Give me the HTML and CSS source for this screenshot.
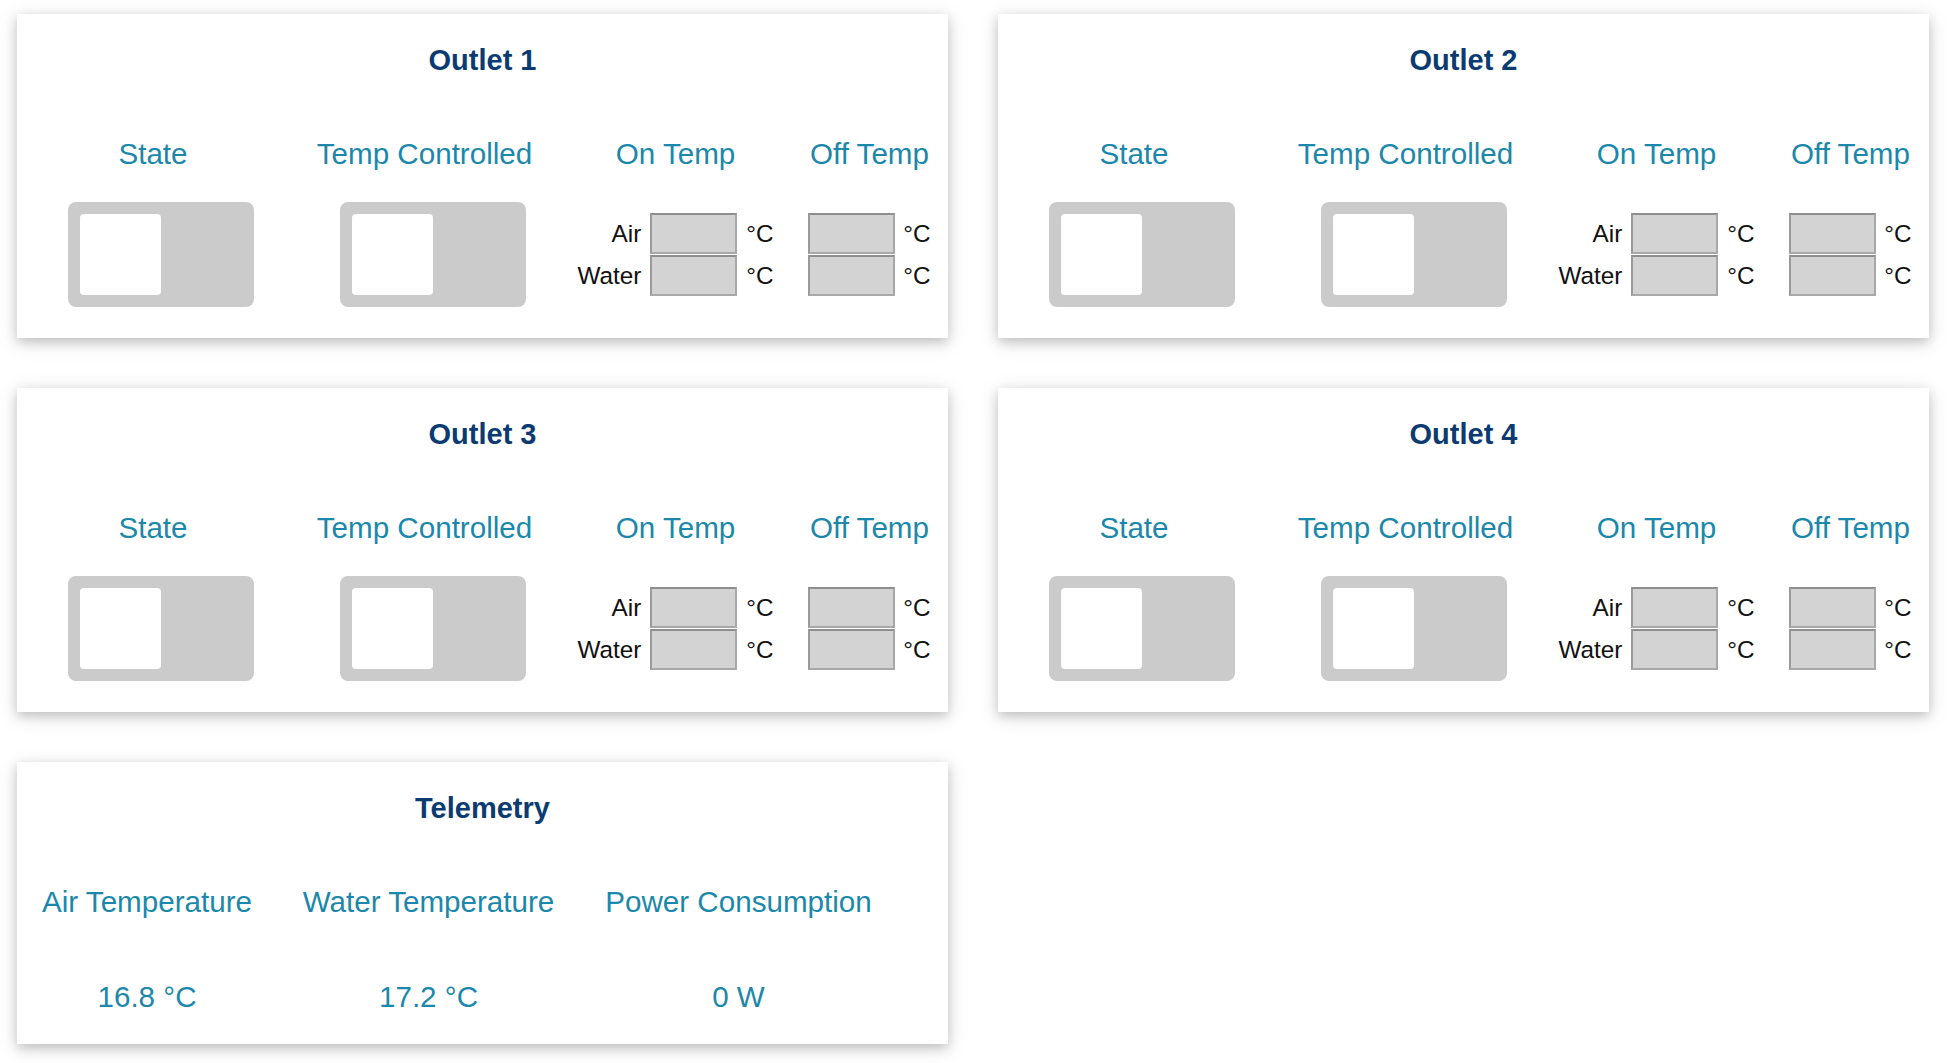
FILE: index.html
```html
<!DOCTYPE html>
<html lang="en">
<head>
<meta charset="utf-8">
<title>Outlets</title>
<link rel="stylesheet" href="styles.css">
</head>
<body>
<div class="page">
  <section class="card">
    <h2 class="card-title">Outlet 1</h2>
    <div class="outlet-grid">
      <div class="col-label">State</div>
      <div class="col-label">Temp Controlled</div>
      <div class="col-label">On Temp</div>
      <div class="col-label">Off Temp</div>
      <div class="cell"><span class="switch"><span class="knob"></span></span></div>
      <div class="cell"><span class="switch"><span class="knob"></span></span></div>
      <div class="cell">
        <div class="temps">
          <span class="t-label">Air</span><span class="t-input"></span><span class="t-unit">°C</span>
          <span class="t-label">Water</span><span class="t-input"></span><span class="t-unit">°C</span>
        </div>
      </div>
      <div class="cell">
        <div class="temps temps-off">
          <span class="t-input"></span><span class="t-unit">°C</span>
          <span class="t-input"></span><span class="t-unit">°C</span>
        </div>
      </div>
    </div>
  </section>

  <section class="card">
    <h2 class="card-title">Outlet 2</h2>
    <div class="outlet-grid">
      <div class="col-label">State</div>
      <div class="col-label">Temp Controlled</div>
      <div class="col-label">On Temp</div>
      <div class="col-label">Off Temp</div>
      <div class="cell"><span class="switch"><span class="knob"></span></span></div>
      <div class="cell"><span class="switch"><span class="knob"></span></span></div>
      <div class="cell">
        <div class="temps">
          <span class="t-label">Air</span><span class="t-input"></span><span class="t-unit">°C</span>
          <span class="t-label">Water</span><span class="t-input"></span><span class="t-unit">°C</span>
        </div>
      </div>
      <div class="cell">
        <div class="temps temps-off">
          <span class="t-input"></span><span class="t-unit">°C</span>
          <span class="t-input"></span><span class="t-unit">°C</span>
        </div>
      </div>
    </div>
  </section>

  <section class="card">
    <h2 class="card-title">Outlet 3</h2>
    <div class="outlet-grid">
      <div class="col-label">State</div>
      <div class="col-label">Temp Controlled</div>
      <div class="col-label">On Temp</div>
      <div class="col-label">Off Temp</div>
      <div class="cell"><span class="switch"><span class="knob"></span></span></div>
      <div class="cell"><span class="switch"><span class="knob"></span></span></div>
      <div class="cell">
        <div class="temps">
          <span class="t-label">Air</span><span class="t-input"></span><span class="t-unit">°C</span>
          <span class="t-label">Water</span><span class="t-input"></span><span class="t-unit">°C</span>
        </div>
      </div>
      <div class="cell">
        <div class="temps temps-off">
          <span class="t-input"></span><span class="t-unit">°C</span>
          <span class="t-input"></span><span class="t-unit">°C</span>
        </div>
      </div>
    </div>
  </section>

  <section class="card">
    <h2 class="card-title">Outlet 4</h2>
    <div class="outlet-grid">
      <div class="col-label">State</div>
      <div class="col-label">Temp Controlled</div>
      <div class="col-label">On Temp</div>
      <div class="col-label">Off Temp</div>
      <div class="cell"><span class="switch"><span class="knob"></span></span></div>
      <div class="cell"><span class="switch"><span class="knob"></span></span></div>
      <div class="cell">
        <div class="temps">
          <span class="t-label">Air</span><span class="t-input"></span><span class="t-unit">°C</span>
          <span class="t-label">Water</span><span class="t-input"></span><span class="t-unit">°C</span>
        </div>
      </div>
      <div class="cell">
        <div class="temps temps-off">
          <span class="t-input"></span><span class="t-unit">°C</span>
          <span class="t-input"></span><span class="t-unit">°C</span>
        </div>
      </div>
    </div>
  </section>

  <section class="card card-telemetry">
    <h2 class="card-title">Telemetry</h2>
    <div class="telemetry-grid">
      <div class="col-label">Air Temperature</div>
      <div class="col-label">Water Temperature</div>
      <div class="col-label">Power Consumption</div>
      <div class="value">16.8 °C</div>
      <div class="value">17.2 °C</div>
      <div class="value">0 W</div>
    </div>
  </section>
</div>
</body>
</html>
```

FILE: styles.css
```css
html, body {
  margin: 0;
  padding: 0;
  background: #ffffff;
}

body {
  font-family: "Liberation Sans", Arial, Helvetica, sans-serif;
  color: #111111;
}

.page {
  display: grid;
  grid-template-columns: 931px 931px;
  column-gap: 50px;
  row-gap: 50px;
  padding: 14px 0 19px 17px;
  align-items: start;
}

.card {
  background: #ffffff;
  box-shadow: 0 4px 10px 0 rgba(0, 0, 0, 0.17), 0 4px 20px 0 rgba(0, 0, 0, 0.13);
  padding: 30px 0 31px;
  height: 324px;
  box-sizing: border-box;
}

.card-telemetry {
  height: 282px;
}

.card-title {
  margin: 0 0 60px;
  font-size: 29px;
  line-height: 33px;
  font-weight: bold;
  text-align: center;
  color: #0c3b72;
}

.col-label {
  font-size: 29.6px;
  line-height: 33px;
  color: #1b88ab;
  text-align: center;
  white-space: nowrap;
}

.outlet-grid {
  display: grid;
  grid-template-columns: 264px 279px 223px 165px;
  grid-template-rows: 33px 105px;
  row-gap: 32px;
  margin-left: 4px;
  width: 931px;
}

.cell {
  display: flex;
  align-items: center;
  justify-content: center;
}

.switch {
  display: block;
  width: 186px;
  height: 105px;
  margin-left: 16px;
  background: #cbcbcb;
  border-radius: 8px;
  padding: 12px;
  box-sizing: border-box;
}

.knob {
  display: block;
  width: 81px;
  height: 81px;
  background: #ffffff;
  border-radius: 4px;
}

.temps {
  display: grid;
  grid-template-columns: auto 87px auto;
  grid-auto-rows: 42px;
  column-gap: 9px;
  align-items: start;
  font-size: 24.3px;
  line-height: 41px;
  color: #111111;
}

.temps-off {
  grid-template-columns: 87px auto;
  column-gap: 8px;
}

.t-label {
  text-align: right;
}

.t-input {
  display: block;
  height: 41px;
  background: #d3d3d3;
  border: 2px solid #a8a8a8;
  border-top-color: #8e8e8e;
  border-left-color: #9a9a9a;
  box-sizing: border-box;
}

.telemetry-grid {
  display: grid;
  grid-template-columns: 260px 303px 317px;
  justify-content: start;
  row-gap: 62px;
}

.value {
  font-size: 29.6px;
  line-height: 33px;
  color: #1b88ab;
  text-align: center;
  white-space: nowrap;
}
```
